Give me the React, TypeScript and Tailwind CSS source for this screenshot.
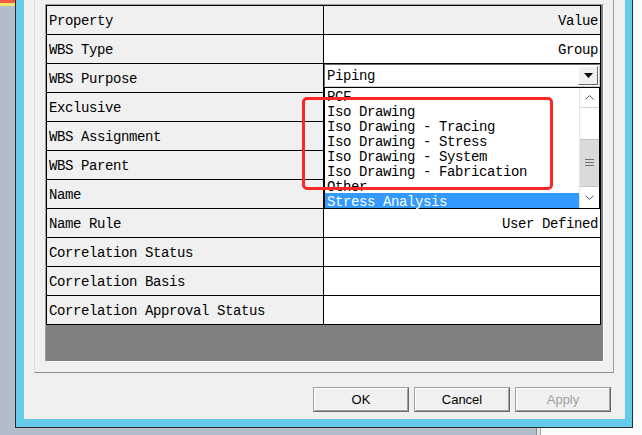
import React from "react";

const mono = "font-['Liberation_Mono','DejaVu_Sans_Mono',monospace] text-[14px] tracking-[-0.4px] text-black";

const rows: [string, string][] = [
  ["WBS Type", "Group"],
  ["WBS Purpose", ""],
  ["Exclusive", ""],
  ["WBS Assignment", ""],
  ["WBS Parent", ""],
  ["Name", ""],
  ["Name Rule", "User Defined"],
  ["Correlation Status", ""],
  ["Correlation Basis", ""],
  ["Correlation Approval Status", ""],
];

const purposes = [
  "PCF",
  "Iso Drawing",
  "Iso Drawing - Tracing",
  "Iso Drawing - Stress",
  "Iso Drawing - System",
  "Iso Drawing - Fabrication",
  "Other",
  "Stress Analysis",
];

const Chevron = ({ up }: { up?: boolean }) => (
  <svg width="9" height="5" viewBox="0 0 9 5" className="block">
    <path
      d={up ? "M0.5 4.5 L4.5 0.5 L8.5 4.5" : "M0.5 0.5 L4.5 4.5 L8.5 0.5"}
      stroke="#606060"
      strokeWidth="1"
      fill="none"
    />
  </svg>
);

const PurposeList = () => (
  <div className="absolute left-0 top-[23px] z-10 flex h-[122px] w-[276px] border border-black bg-white">
    <div className="flex-1">
      {purposes.map((p) => {
        const sel = p === "Stress Analysis";
        return (
          <div
            key={p}
            className={`h-[15px] whitespace-pre pl-[2px] pt-[3px] leading-[12px] ${
              sel ? "bg-[#3399ff] text-white" : ""
            }`}
          >
            {p}
          </div>
        );
      })}
    </div>
    <div className="flex w-[20px] flex-col border-l border-[#e6e6e6] bg-white">
      <div className="flex h-[20px] items-center justify-center border-b border-[#d4d4d4]">
        <Chevron up />
      </div>
      <div className="h-[31px]" />
      <div className="flex h-[48px] items-center justify-center border-y border-[#c2c2c2] bg-[#dadada]">
        <svg width="9" height="8" viewBox="0 0 9 8" className="block">
          <path d="M0 0.5 H9 M0 3.5 H9 M0 6.5 H9" stroke="#707070" strokeWidth="1" />
        </svg>
      </div>
      <div className="flex flex-1 items-center justify-center">
        <Chevron />
      </div>
    </div>
  </div>
);

const PurposeCombo = () => (
  <div className="relative h-full">
    <div className="flex h-[23px] items-center border border-t-[#6d6d6d] border-l-[#6d6d6d] border-b-[#cfcfcf] border-r-[#cfcfcf] bg-white">
      <div className="flex-1 pl-[2px] pt-[2px] leading-[15px]">Piping</div>
      <div className="mr-px flex h-[19px] w-[20px] items-center justify-center border border-t-white border-l-white border-b-[#696969] border-r-[#696969] bg-[#f0f0f0]">
        <svg width="9" height="5" viewBox="0 0 9 5" className="block">
          <path d="M0 0 H9 L4.5 5 Z" fill="#000" />
        </svg>
      </div>
    </div>
    <PurposeList />
  </div>
);

const PropertyGrid = () => (
  <div className={`ml-[10px] mt-[4px] mr-[9px] h-[358px] border border-t-[#a0a0a0] border-l-[#a0a0a0] border-b-white border-r-white bg-[#808080] ${mono}`}>
    <div className="w-[555px] border-x border-t border-black">
      <div className="flex h-[29px] border-b border-black bg-[#f0f0f0]">
        <div className="w-[277px] border-r border-black pl-[2px] pt-[8px] leading-[15px]">Property</div>
        <div className="flex-1 pr-[2px] pt-[8px] text-right leading-[15px]">Value</div>
      </div>
      {rows.map(([label, value]) => (
        <div key={label} className="flex h-[29px] border-b border-black">
          <div className="w-[277px] whitespace-pre border-r border-black bg-[#f0f0f0] pl-[2px] pt-[8px] leading-[15px]">
            {label}
          </div>
          <div className="flex-1 bg-white">
            {label === "WBS Purpose" ? (
              <PurposeCombo />
            ) : (
              <div className="pr-[2px] pt-[8px] text-right leading-[15px]">{value}</div>
            )}
          </div>
        </div>
      ))}
    </div>
  </div>
);

const DlgButton = ({ label, disabled }: { label: string; disabled?: boolean }) => (
  <div className="h-[25px] w-[96px] border border-t-[#a0a0a0] border-l-[#a0a0a0] border-b-[#696969] border-r-[#696969]">
    <div
      className={`flex h-full items-center justify-center border border-t-white border-l-white border-b-[#a0a0a0] border-r-[#a0a0a0] bg-[#f0f0f0] font-['Liberation_Sans',Arial,sans-serif] text-[13px] ${
        disabled ? "text-[#a0a0a0]" : "text-black"
      }`}
    >
      {label}
    </div>
  </div>
);

export default function App() {
  return (
    <div className="relative h-[435px] w-[642px] overflow-hidden bg-[#b3bccb]">
      <div className="flex h-[428px]">
        {/* desktop strip on the left */}
        <div className="w-[15px]">
          <div className="h-[3px] bg-[#ef5b3c]" />
          <div className="h-[3px] bg-[#f1e46c]" />
        </div>

        {/* dialog window */}
        <div className="flex w-[618px] flex-col border-x border-b border-[#2b2b2b] bg-[#66cbea] pb-[8px] pl-[8px] pr-[7px]">
          <div className="flex h-[419px] flex-col bg-[#f0f0f0]">
            <div className="ml-[10px] mr-[11px] h-[373px] border-b border-l border-r border-b-[#8c8c8c] border-l-[#dedede] border-r-[#a0a0a0]">
              <PropertyGrid />
            </div>
            <div className="mt-[14px] flex justify-end gap-[5px] pr-[14px]">
              <DlgButton label="OK" />
              <DlgButton label="Cancel" />
              <DlgButton label="Apply" disabled />
            </div>
          </div>
        </div>

        <div className="flex-1 bg-[#fbfbfb]" />
      </div>

      <div className="flex h-[7px]">
        <div className="w-[536px]" />
        <div className="w-px bg-[#8c8c8c]" />
        <div className="w-[3px] bg-[#e2e2e2]" />
        <div className="w-px bg-[#a0a0a0]" />
        <div className="flex-1 bg-[#fbfbfb]" />
      </div>

      {/* red highlight around the drawing purposes */}
      <div className="absolute left-[302px] top-[97px] z-20 h-[93px] w-[251px] rounded-[5px] border-[3px] border-[#ff2626]" />
    </div>
  );
}
